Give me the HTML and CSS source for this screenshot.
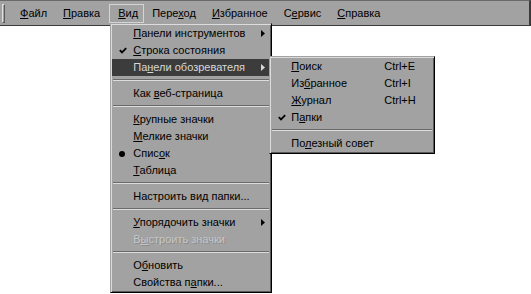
FILE: index.html
```html
<!DOCTYPE html>
<html lang="ru">
<head>
  <meta charset="UTF-8" />
  <title>Вид</title>
  <link rel="stylesheet" href="styles.css">
</head>
<body>
  <div class="window">
    <div class="menubar">
      <div class="grip"></div>
      <div class="bar-item"><u>Ф</u>айл</div>
      <div class="bar-item"><u>П</u>равка</div>
      <div class="bar-item open"><u>В</u>ид
        <div class="dropdown">
          <div class="row"><span class="mark"></span><span class="label"><u>П</u>анели инструментов</span><svg class="arrow" width="4" height="7"><polygon points="0,0 4,3.5 0,7" /></svg></div>
          <div class="row"><span class="mark"><svg width="8" height="7"><path d="M0.8 3.2 L3 5.4 L7.2 1.2" /></svg></span><span class="label"><u>С</u>трока состояния</span></div>
          <div class="row active"><span class="mark"></span><span class="label">Па<u>н</u>ели обозревателя</span><svg class="arrow" width="4" height="7"><polygon points="0,0 4,3.5 0,7" /></svg>
            <div class="submenu">
              <div class="row"><span class="mark"></span><span class="label short"><u>П</u>оиск</span><span class="keys">Ctrl+E</span></div>
              <div class="row"><span class="mark"></span><span class="label short">Из<u>б</u>ранное</span><span class="keys">Ctrl+I</span></div>
              <div class="row"><span class="mark"></span><span class="label short"><u>Ж</u>урнал</span><span class="keys">Ctrl+H</span></div>
              <div class="row"><span class="mark"><svg width="8" height="7"><path d="M0.8 3.2 L3 5.4 L7.2 1.2" /></svg></span><span class="label">П<u>а</u>пки</span></div>
              <div class="sep"></div>
              <div class="row"><span class="mark"></span><span class="label">По<u>л</u>езный совет</span></div>
            </div>
          </div>
          <div class="sep"></div>
          <div class="row"><span class="mark"></span><span class="label">Как <u>в</u>еб-страница</span></div>
          <div class="sep"></div>
          <div class="row"><span class="mark"></span><span class="label"><u>К</u>рупные значки</span></div>
          <div class="row"><span class="mark"></span><span class="label"><u>М</u>елкие значки</span></div>
          <div class="row"><span class="mark"><svg width="6" height="6"><circle cx="3" cy="3" r="3" /></svg></span><span class="label">Спис<u>о</u>к</span></div>
          <div class="row"><span class="mark"></span><span class="label"><u>Т</u>аблица</span></div>
          <div class="sep"></div>
          <div class="row"><span class="mark"></span><span class="label">Настроить ви<u>д</u> папки...</span></div>
          <div class="sep"></div>
          <div class="row"><span class="mark"></span><span class="label"><u>У</u>порядочить значки</span><svg class="arrow" width="4" height="7"><polygon points="0,0 4,3.5 0,7" /></svg></div>
          <div class="row disabled"><span class="mark"></span><span class="label">В<u>ы</u>строить значки</span></div>
          <div class="sep"></div>
          <div class="row"><span class="mark"></span><span class="label">О<u>б</u>новить</span></div>
          <div class="row"><span class="mark"></span><span class="label">Свойства п<u>а</u>пки...</span></div>
        </div>
      </div>
      <div class="bar-item">Пере<u>х</u>од</div>
      <div class="bar-item"><u>И</u>збранное</div>
      <div class="bar-item">С<u>е</u>рвис</div>
      <div class="bar-item"><u>С</u>правка</div>
    </div>
  </div>
</body>
</html>
```

FILE: styles.css
```css
html, body {
  height: 100%;
}
body {
  margin: 0;
  background: #fff;
  font-family: 'Liberation Sans', Arial, sans-serif;
  font-size: 11px;
  color: #000;
}
.window {
  height: 100%;
}
u {
  text-decoration: underline;
  text-underline-offset: 1px;
}
.menubar {
  display: flex;
  align-items: flex-start;
  height: 20px;
  padding: 3px 0 1px 2px;
  background: #a2a2a2;
  border-top: 1px solid #6a6a6a;
  border-bottom: 1px solid #3a3a3a;
  border-right: 2px solid #3a3a3a;
}
.grip {
  width: 1px;
  height: 17px;
  margin-right: 7px;
  background: #a2a2a2;
  border-left: 1px solid #e0e0e0;
  border-top: 1px solid #e0e0e0;
  border-right: 1px solid #5a5a5a;
  border-bottom: 1px solid #5a5a5a;
}
.bar-item {
  position: relative;
  height: 17px;
  line-height: 17px;
  padding: 0 7px;
  border: 1px solid transparent;
  white-space: nowrap;
}
.bar-item.open {
  margin-left: 1px;
  padding: 0 5px 0 8px;
  border-color: #d4d4d4;
}
.dropdown {
  position: absolute;
  top: 18px;
  left: 0;
  width: 158px;
  padding: 1px;
  background: #a2a2a2;
  border: 1px solid;
  border-color: #a2a2a2 #000 #000 #a2a2a2;
  box-shadow: inset 1px 1px #dcdcdc, inset -1px -1px #5a5a5a;
  z-index: 2;
}
.row {
  position: relative;
  display: flex;
  align-items: center;
  height: 17px;
  line-height: 17px;
}
.mark {
  flex: 0 0 21px;
  display: flex;
  align-items: center;
  padding-left: 7px;
  box-sizing: border-box;
}
.mark path {
  fill: none;
  stroke: #000;
  stroke-width: 1.8;
}
.mark circle {
  fill: #000;
}
.label {
  flex: 1;
  white-space: nowrap;
}
.arrow {
  margin-right: 5px;
  fill: #000;
}
.row.active {
  background: #3c3c3c;
  color: #d8d8d8;
}
.row.active .arrow {
  fill: #d8d8d8;
}
.row.disabled {
  color: #c6c6c6;
  text-shadow: 1px 1px #8c8c8c;
}
.sep {
  height: 0;
  margin: 3px 1px 4px 1px;
  border-top: 1px solid #6a6a6a;
  border-bottom: 1px solid #dcdcdc;
}
.submenu {
  position: absolute;
  top: -3px;
  left: calc(100% - 1px);
  width: 162px;
  padding: 1px;
  background: #a2a2a2;
  color: #000;
  border: 1px solid;
  border-color: #a2a2a2 #000 #000 #a2a2a2;
  box-shadow: inset 1px 1px #dcdcdc, inset -1px -1px #5a5a5a;
}
.submenu .mark {
  flex-basis: 20px;
}
.label.short {
  flex: 0 0 93px;
}
.keys {
  white-space: nowrap;
}
```
